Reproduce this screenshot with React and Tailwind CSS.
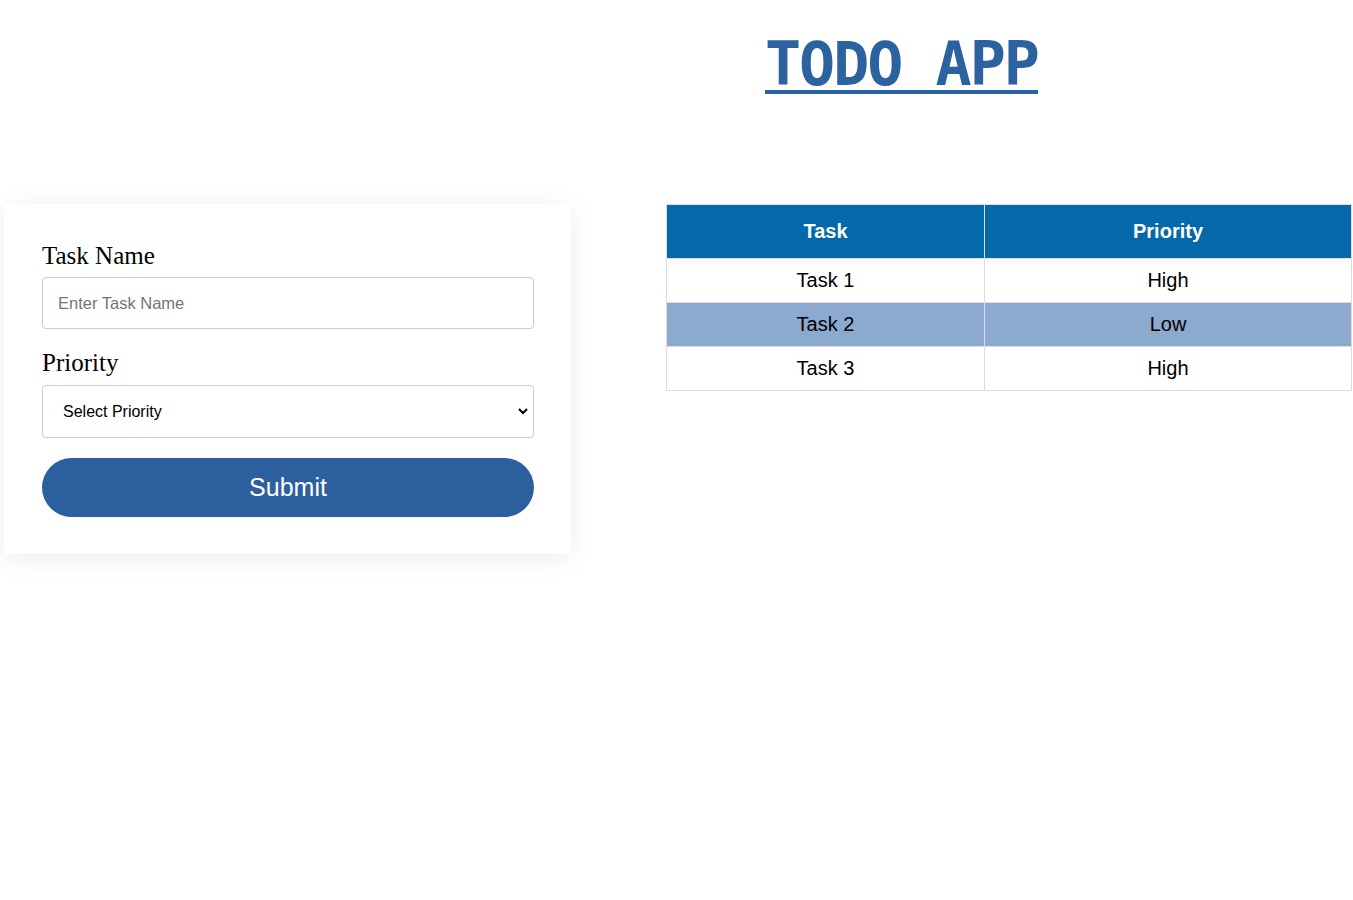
import { useState } from "react";

const tasks = [
  { name: "Task 1", priority: "High" },
  { name: "Task 2", priority: "Low" },
  { name: "Task 3", priority: "High" },
];

function TaskForm() {
  const [taskName, setTaskName] = useState("");
  const [priority, setPriority] = useState("");

  return (
    <div className="w-[567px] h-[350px] bg-white shadow-[0_4px_24px_rgba(0,0,0,0.08)] pl-[38px] pr-[37px] pt-[33px] font-['Liberation_Serif',serif]">
      <label className="block text-[25px] leading-[38px] text-black">Task Name</label>
      <input
        className="mt-[2px] w-full h-[52px] border border-[#cccccc] rounded-[4px] px-[15px] text-[16.5px] font-['Liberation_Sans',sans-serif] placeholder:text-[#757575] outline-none"
        placeholder="Enter Task Name"
        value={taskName}
        onChange={(e) => setTaskName(e.target.value)}
      />
      <label className="block mt-[15px] text-[25px] leading-[38px] text-black">Priority</label>
      <div className="relative mt-[3px]">
        <select
          className="appearance-none w-full h-[53px] border border-[#cccccc] rounded-[4px] px-[20px] text-[16px] text-black bg-white font-['Liberation_Sans',sans-serif] outline-none"
          value={priority}
          onChange={(e) => setPriority(e.target.value)}
        >
          <option value="">Select Priority</option>
          <option value="High">High</option>
          <option value="Low">Low</option>
        </select>
        <svg className="absolute right-[5px] top-[21px] pointer-events-none" width="12" height="10" viewBox="0 0 12 10">
          <path d="M2 3 L6 7 L10 3" stroke="black" strokeWidth="2" fill="none" />
        </svg>
      </div>
      <button className="mt-[20px] w-full h-[59px] rounded-full bg-[#2c5f9e] text-white text-[25px] font-['Liberation_Sans',sans-serif]">
        Submit
      </button>
    </div>
  );
}

function TaskTable() {
  return (
    <table className="w-[686px] border-collapse font-['Liberation_Sans',sans-serif] text-[20px]">
      <thead>
        <tr className="bg-[#0568a9] text-white h-[54px]">
          <th className="w-[318px] border border-[#dddddd] font-bold pb-[2px]">Task</th>
          <th className="border border-[#dddddd] font-bold pb-[2px]">Priority</th>
        </tr>
      </thead>
      <tbody>
        {tasks.map((task, index) => (
          <tr key={index} className={index % 2 === 1 ? "bg-[#8ca9cf] h-[44px]" : "bg-white h-[44px]"}>
            <td className="border border-[#dddddd] text-center text-black pb-[2px]">{task.name}</td>
            <td className="border border-[#dddddd] text-center text-black pb-[2px]">{task.priority}</td>
          </tr>
        ))}
      </tbody>
    </table>
  );
}

export default function App() {
  return (
    <div className="w-[1353px] h-[900px] bg-white relative overflow-hidden">
      {/* ---------- Title ---------- */}
      <div className="pt-[28px] pl-[765px]">
        <h1 className="inline-block font-['DejaVu_Sans_Mono',monospace] font-bold text-[60px] leading-[72px] tracking-[-2px] text-[#2c62a0] underline decoration-[4px] underline-offset-[5px] whitespace-pre">
          TODO APP
        </h1>
      </div>

      {/* ---------- Form + Table ---------- */}
      <div className="flex items-start mt-[104px] pl-[4px]">
        <TaskForm />
        <div className="ml-[95px]">
          <TaskTable />
        </div>
      </div>
    </div>
  );
}
